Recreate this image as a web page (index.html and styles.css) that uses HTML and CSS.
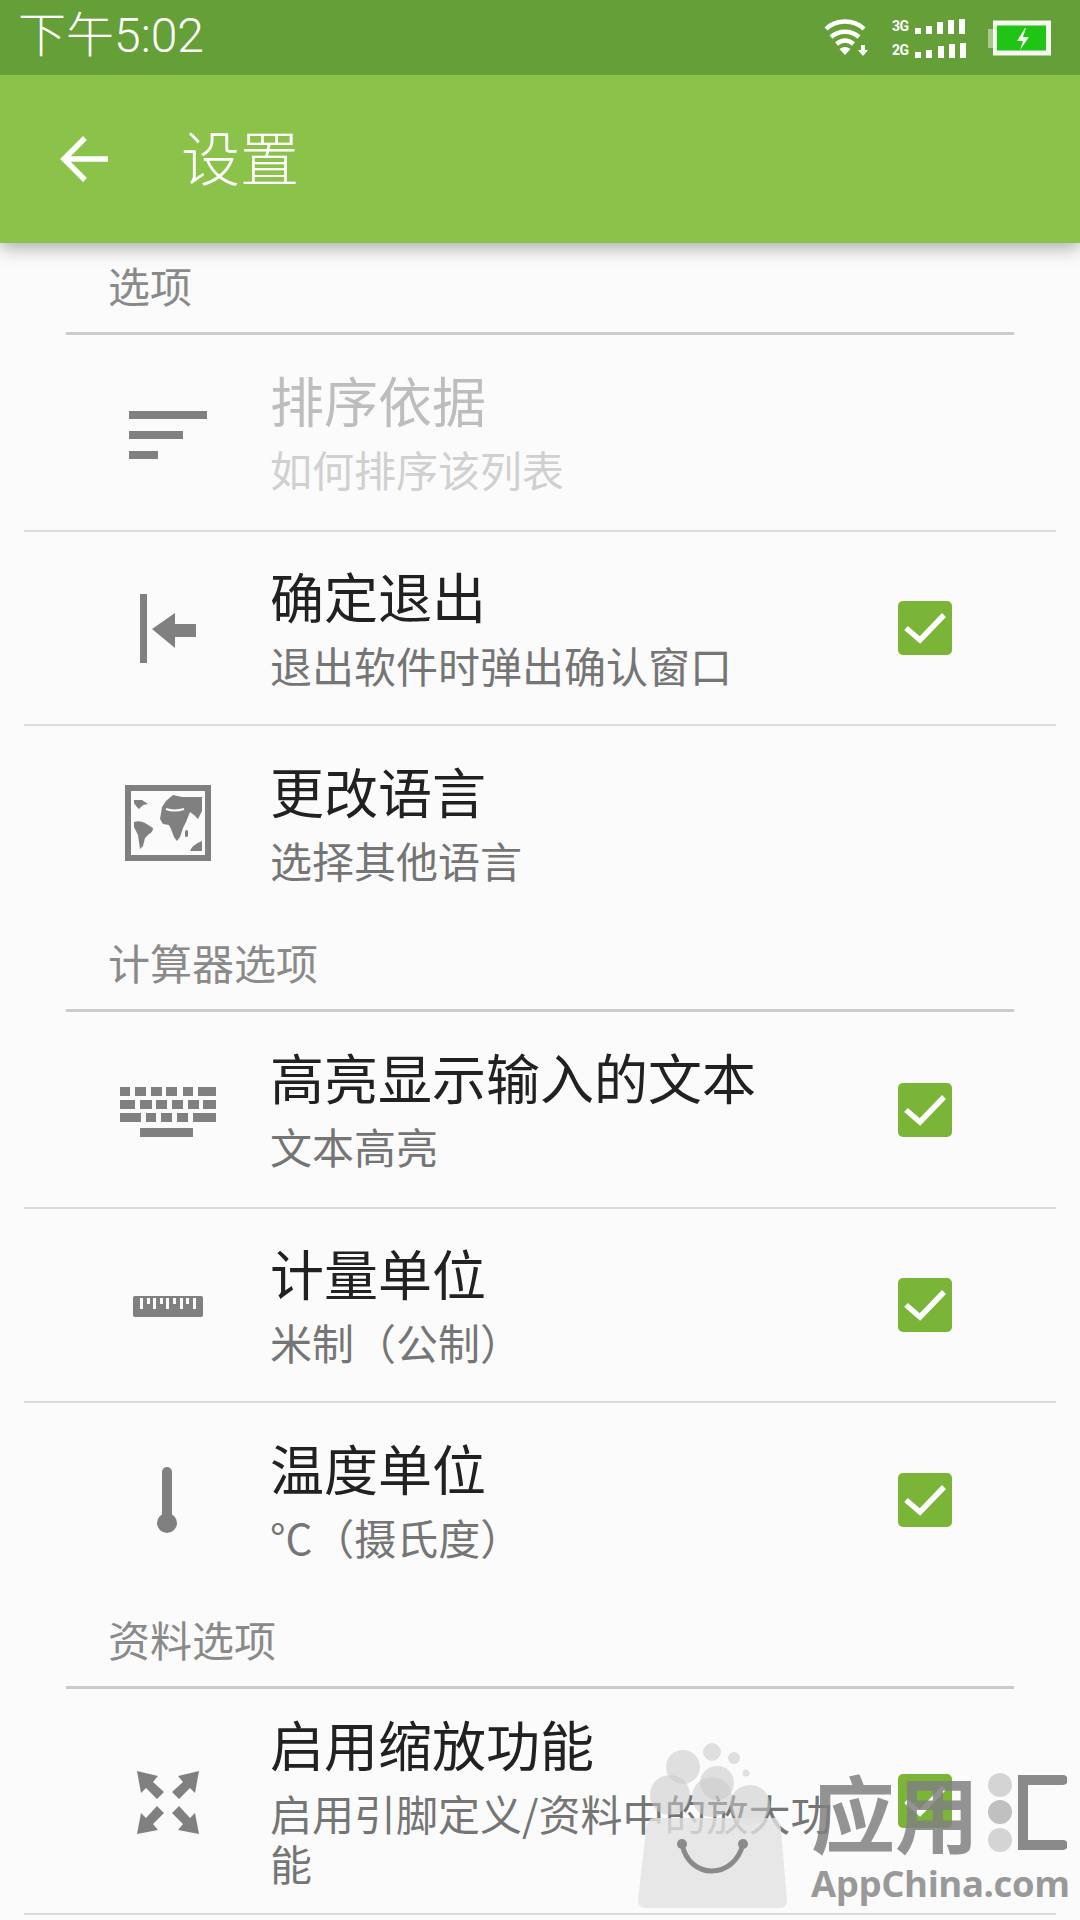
FILE: index.html
```html
<!DOCTYPE html>
<html lang="zh">
<head>
<meta charset="utf-8">
<title>设置</title>
<link rel="stylesheet" href="styles.css">
</head>
<body>
<div class="page">
  <header class="statusbar">
    <span class="time">下午5:02</span>
    <div class="status-icons">
      <svg class="wifi" width="50" height="40" viewBox="0 0 50 40">
        <path d="M3 11C13 1 31 1 41 11" fill="none" stroke="#fff" stroke-width="4.5"/>
        <path d="M8 19C16 12 28 12 36 19" fill="none" stroke="#fff" stroke-width="4.5"/>
        <path d="M13.5 26C19 21.5 25 21.5 30.5 26" fill="none" stroke="#fff" stroke-width="4.5"/>
        <path d="M16.5 31Q22 27 27.5 31L22 37Z" fill="#fff"/>
        <path d="M38 27h4v5h3l-5 6-5-6h3z" fill="#fff"/>
      </svg>
      <div class="signal">
        <div class="signal-row"><span class="net">3G</span>
          <svg width="54" height="20" viewBox="0 0 54 20"><g fill="#fff"><rect x="0" y="12" width="6" height="6"/><rect x="11" y="10" width="6" height="8"/><rect x="22" y="6" width="6" height="12"/><rect x="33" y="4" width="6" height="14"/><rect x="44" y="3" width="6" height="15"/></g></svg>
        </div>
        <div class="signal-row"><span class="net">2G</span>
          <svg width="54" height="20" viewBox="0 0 54 20"><g fill="#fff"><rect x="0" y="12" width="6" height="6"/><rect x="11" y="10" width="6" height="8"/><rect x="23" y="6" width="6" height="12"/><rect x="34" y="4" width="6" height="14"/><rect x="45" y="3" width="6" height="15"/></g></svg>
        </div>
      </div>
      <svg class="battery" width="64" height="38" viewBox="0 0 64 38">
        <rect x="0" y="10" width="5" height="19" fill="#a9c98c"/>
        <rect x="5" y="1.5" width="58" height="35" fill="#f4f8ee"/>
        <rect x="9" y="6.5" width="49" height="25" fill="#1fc414"/>
        <path d="M37 9l-8 13h6l-3 9 9-13h-6l3-9z" fill="#f4f8ee"/>
      </svg>
    </div>
  </header>
  <div class="toolbar">
    <svg class="back" width="50" height="48" viewBox="0 0 50 48">
      <path d="M25 3L4 24l21 21M4 24h44" fill="none" stroke="#fff" stroke-width="5.5"/>
    </svg>
    <h1 class="title">设置</h1>
  </div>

  <main class="content">
    <div class="section">选项</div>
    <div class="row row-disabled">
      <svg class="icon" viewBox="0 0 96 96"><g fill="#808080"><rect x="9" y="26" width="78" height="8"/><rect x="9" y="46" width="54" height="8"/><rect x="9" y="66" width="29" height="8"/></g></svg>
      <div class="text"><div class="name">排序依据</div><div class="sub">如何排序该列表</div></div>
    </div>
    <div class="row">
      <svg class="icon" viewBox="0 0 96 96"><g fill="#808080"><rect x="20" y="14" width="7" height="69"/><path d="M32 49l23-16v11h21v13H55v11z"/></g></svg>
      <div class="text"><div class="name">确定退出</div><div class="sub">退出软件时弹出确认窗口</div></div>
      <span class="check"><svg width="54" height="54" viewBox="0 0 54 54"><path d="M8 27l14 12 24-25" fill="none" stroke="#fff" stroke-width="5.5"/></svg></span>
    </div>
    <div class="row row-plain">
      <svg class="icon" viewBox="0 0 96 96">
        <rect x="8" y="13" width="80" height="70" fill="none" stroke="#808080" stroke-width="6"/>
        <g fill="#808080">
          <path d="M14 25l8 0 6 4-5 1-4 4-3-3-2-3z"/>
          <path d="M14 47q6-2 11 1l8 5q0 4-4 6l-4 4-2 8-3 3-2-14-4-8z"/>
          <path d="M42 32L46 26L53 20L62 22L82 22L82 36L78 44L74 40L70 37L68 42L66 47L63 53L60 62L57 66L54 62L51 54L49 50L43 49L40 44L41 38Z"/>
          <path d="M70 76q2-6 12-10v10z"/>
          <rect x="65" y="55" width="3" height="7" rx="1.5"/>
        </g>
        <path d="M46 34q8 3 18 0" fill="none" stroke="#fbfbfb" stroke-width="2"/>
      </svg>
      <div class="text"><div class="name">更改语言</div><div class="sub">选择其他语言</div></div>
    </div>

    <div class="section">计算器选项</div>
    <div class="row">
      <svg class="icon" viewBox="0 0 96 96"><g fill="#808080">
        <rect x="0" y="25" width="10" height="9"/><rect x="15" y="25" width="11" height="9"/><rect x="31" y="25" width="11" height="9"/><rect x="46" y="25" width="11" height="9"/><rect x="63" y="25" width="10" height="9"/><rect x="78" y="25" width="18" height="9"/>
        <rect x="0" y="38" width="15" height="9"/><rect x="20" y="38" width="12" height="9"/><rect x="36" y="38" width="11" height="9"/><rect x="52" y="38" width="11" height="9"/><rect x="68" y="38" width="11" height="9"/><rect x="83" y="38" width="13" height="9"/>
        <rect x="0" y="51" width="21" height="9"/><rect x="26" y="51" width="10" height="9"/><rect x="41" y="51" width="11" height="9"/><rect x="57" y="51" width="11" height="9"/><rect x="73" y="51" width="23" height="9"/>
        <rect x="20" y="66" width="53" height="9"/>
      </g></svg>
      <div class="text"><div class="name">高亮显示输入的文本</div><div class="sub">文本高亮</div></div>
      <span class="check"><svg width="54" height="54" viewBox="0 0 54 54"><path d="M8 27l14 12 24-25" fill="none" stroke="#fff" stroke-width="5.5"/></svg></span>
    </div>
    <div class="row">
      <svg class="icon" viewBox="0 0 96 96">
        <rect x="13" y="39" width="70" height="21" rx="2" fill="#808080"/>
        <g fill="#fbfbfb"><rect x="20" y="41" width="3" height="11"/><rect x="27" y="41" width="3" height="6"/><rect x="33" y="41" width="3" height="11"/><rect x="40" y="41" width="3" height="6"/><rect x="46" y="41" width="3" height="11"/><rect x="53" y="41" width="3" height="6"/><rect x="60" y="41" width="3" height="11"/><rect x="66" y="41" width="3" height="6"/><rect x="73" y="41" width="3" height="11"/></g>
      </svg>
      <div class="text"><div class="name">计量单位</div><div class="sub">米制（公制）</div></div>
      <span class="check"><svg width="54" height="54" viewBox="0 0 54 54"><path d="M8 27l14 12 24-25" fill="none" stroke="#fff" stroke-width="5.5"/></svg></span>
    </div>
    <div class="row row-plain">
      <svg class="icon" viewBox="0 0 96 96"><g fill="#808080"><path d="M42 20a5 5 0 0 1 10 0v50H42z"/><circle cx="47" cy="71" r="10"/></g></svg>
      <div class="text"><div class="name">温度单位</div><div class="sub">°C（摄氏度）</div></div>
      <span class="check"><svg width="54" height="54" viewBox="0 0 54 54"><path d="M8 27l14 12 24-25" fill="none" stroke="#fff" stroke-width="5.5"/></svg></span>
    </div>

    <div class="section">资料选项</div>
    <div class="row row-tall">
      <svg class="icon" viewBox="0 0 96 96"><g fill="#808080">
        <path d="M17 18L38 23L33 29L44 39L37 46L26 35L21 40Z"/>
        <path d="M79 18L58 23L63 29L52 39L59 46L70 35L75 40Z"/>
        <path d="M17 81L38 77L33 71L44 60L37 53L26 65L21 60Z"/>
        <path d="M79 81L58 77L63 71L52 60L59 53L70 65L75 60Z"/>
      </g></svg>
      <div class="text text-narrow"><div class="name">启用缩放功能</div><div class="sub">启用引脚定义/资料中的放大功能</div></div>
      <span class="check"><svg width="54" height="54" viewBox="0 0 54 54"><path d="M8 27l14 12 24-25" fill="none" stroke="#fff" stroke-width="5.5"/></svg></span>
    </div>
  </main>

  <aside class="watermark">
    <svg class="wm-bag" width="160" height="176" viewBox="0 0 160 176">
      <g fill="#c8c8c8" fill-opacity=".55">
        <circle cx="49" cy="27" r="17"/>
        <circle cx="78" cy="12" r="9"/>
        <circle cx="100" cy="18" r="6"/>
        <circle cx="112" cy="33" r="3.5"/>
        <circle cx="83" cy="43" r="17"/>
        <circle cx="36" cy="55" r="20"/>
        <circle cx="78" cy="57" r="20"/>
        <circle cx="116" cy="65" r="20"/>
      </g>
      <path d="M20 78H140Q146 78 147 90L153 160Q153 168 146 168H12Q4 168 4 160L12 90Q13 78 20 78Z" fill="#e2e2e2" fill-opacity=".8"/>
      <path d="M48 104C55 140 100 140 109 104" fill="none" stroke="#8a8a8a" stroke-width="5"/>
      <circle cx="48" cy="104" r="5" fill="#8a8a8a"/>
      <circle cx="109" cy="104" r="5" fill="#8a8a8a"/>
    </svg>
    <div class="wm-brand">
      <div class="wm-top">
        <span class="wm-cn">应用</span>
        <svg width="80" height="84" viewBox="0 0 80 84">
          <circle cx="13" cy="16" r="12" fill="#d4d4d4"/><circle cx="13" cy="43" r="12" fill="#c0c0c0"/><circle cx="13" cy="71" r="12" fill="#d4d4d4"/>
          <path d="M76 11H36V76H76" fill="none" stroke="#8a8a8a" stroke-width="10" stroke-linecap="round"/>
        </svg>
      </div>
      <div class="wm-en">AppChina.com</div>
    </div>
  </aside>
</div>
</body>
</html>
```

FILE: styles.css
```css
* { box-sizing: border-box; }
html, body { margin: 0; padding: 0; }
body { background: #fafafa; font-family: "Noto Sans CJK SC", "Noto Sans", sans-serif; }
.page { position: relative; width: 1080px; height: 1920px; overflow: hidden; background: #fbfbfb; display: flex; flex-direction: column; }

.statusbar { height: 75px; flex: none; background: #659f37; display: flex; align-items: center; justify-content: space-between; padding: 0 28px 0 18px; color: #fff; position: relative; z-index: 2; }
.time { font-family: "Roboto", "Noto Sans CJK SC", sans-serif; font-size: 48px; font-weight: 300; line-height: 72px; height: 75px; }
.status-icons { display: flex; align-items: center; }
.wifi { margin-right: 19px; }
.signal { display: flex; flex-direction: column; gap: 3px; margin-right: 19px; }
.signal-row { display: flex; align-items: center; gap: 5px; height: 21px; }
.net { font-family: "Roboto", sans-serif; font-size: 14px; font-weight: 700; line-height: 1; width: 18px; color: #fff; letter-spacing: -.5px; }

.toolbar { height: 168px; flex: none; background: #8bc34a; display: flex; align-items: center; padding-left: 60px; box-shadow: 0 4px 18px rgba(0,0,0,.35); position: relative; z-index: 1; }
.title { margin: 0 0 8px 71px; font-size: 59px; font-weight: 300; color: #fff; line-height: 1; }

.content { flex: 1; display: flex; flex-direction: column; }
.section { height: 92px; margin: 0 66px; border-bottom: 3px solid #cccccc; padding-left: 42px; padding-top: 14px; font-size: 42px; line-height: 56px; color: #8a8a8a; flex: none; }
.row { height: 194px; flex: none; margin: 0 24px; border-bottom: 2px solid #dcdcdc; display: flex; align-items: center; position: relative; padding-left: 96px; padding-right: 104px; }
.section + .row { height: 197px; }
.row-plain { border-bottom: none; }
.section + .row-tall { height: 226px; }
.icon { width: 96px; height: 96px; flex: none; }
.text { flex: 1; margin-left: 54px; padding-bottom: 4px; }
.text-narrow { flex: none; width: 586px; }
.name { font-size: 54px; line-height: 66px; color: #212121; }
.sub { font-size: 42px; line-height: 50px; color: #757575; margin-top: 11px; }
.row-disabled .name { color: #bdbdbd; }
.row-disabled .sub { color: #d0d0d0; }
.check { position: absolute; right: 104px; top: 50%; margin-top: -27px; width: 54px; height: 54px; background: #7ab538; border-radius: 5px; display: block; }
.check svg { display: block; }

.watermark { position: absolute; left: 634px; top: 1740px; display: flex; align-items: flex-end; pointer-events: none; z-index: 2; }
.wm-bag { flex: none; }
.wm-brand { margin-left: 17px; margin-bottom: 13px; display: flex; flex-direction: column; }
.wm-top { display: flex; align-items: center; gap: 8px; }
.wm-cn { font-size: 84px; line-height: 84px; font-weight: 700; color: rgba(128,128,128,.85); }
.wm-en { font-family: "Open Sans", sans-serif; font-size: 36.5px; font-weight: 700; line-height: 40px; margin-top: 10px; color: #999999; letter-spacing: -.4px; white-space: nowrap; }
```
